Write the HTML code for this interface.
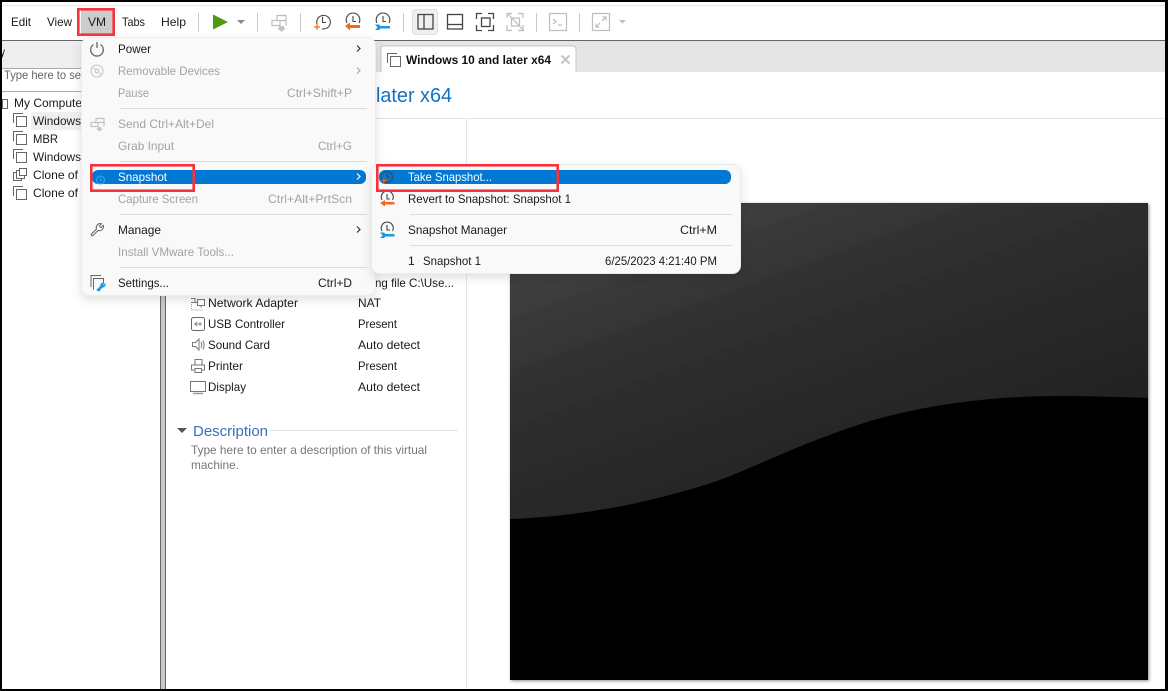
<!DOCTYPE html>
<html><head><meta charset="utf-8"><title>VMware Workstation</title>
<style>
html,body{margin:0;padding:0;background:#fff;width:1168px;height:691px;overflow:hidden}
svg{display:block}
text{font-family:"Liberation Sans",sans-serif;font-size:12px;fill:#1a1a1a}
.d{fill:#a3a3a3}
.w{fill:#fff}
.g{fill:#777}
.ic{fill:none;stroke:#666;stroke-width:1}
.dis{fill:none;stroke:#bdbdbd;stroke-width:1.2}
.sep{stroke:#c9c9c9;stroke-width:1}
</style></head><body>
<svg width="1168" height="691" viewBox="0 0 1168 691" xmlns="http://www.w3.org/2000/svg">
<defs>
<filter id="sh" x="-10%" y="-10%" width="120%" height="125%"><feDropShadow dx="0" dy="4" stdDeviation="5" flood-color="#000" flood-opacity=".12"/></filter>
<filter id="sh2" x="-3%" y="-3%" width="106%" height="106%"><feDropShadow dx="1" dy="1" stdDeviation="1.500" flood-color="#000" flood-opacity=".45"/></filter>
<linearGradient id="bg" gradientUnits="userSpaceOnUse" x1="700" y1="190" x2="820" y2="520">
<stop offset="0" stop-color="#3f3f3f"/><stop offset=".16" stop-color="#3c3c3c"/><stop offset=".16" stop-color="#393939"/><stop offset=".3" stop-color="#353535"/><stop offset=".3" stop-color="#323232"/><stop offset=".45" stop-color="#2f2f2f"/><stop offset=".45" stop-color="#2d2d2d"/><stop offset=".62" stop-color="#2a2a2a"/><stop offset=".62" stop-color="#292929"/><stop offset=".8" stop-color="#262626"/><stop offset="1" stop-color="#212121"/>
</linearGradient>
<g id="vm"><path d="M.5 10V.5H10" class="ic"/><rect x="3.500" y="3.500" width="10" height="10" class="ic"/></g>
<g id="vm2"><rect x=".5" y="4.500" width="8" height="8" class="ic"/><rect x="3.500" y="2.500" width="8" height="8" fill="#fff" stroke="#666"/><rect x="6.500" y=".5" width="7" height="7" fill="#fff" stroke="#666"/></g>
</defs>

<rect width="1168" height="691" fill="#fff"/>

<!-- toolbar -->
<rect x="0" y="5" width="1168" height="1" fill="#e5e5e5"/>
<rect x="81" y="10" width="32" height="25" fill="#ccc"/>
<text x="11" y="26" textLength="20" lengthAdjust="spacingAndGlyphs">Edit</text>
<text x="47" y="26" textLength="25" lengthAdjust="spacingAndGlyphs">View</text>
<text x="88" y="26" textLength="18" lengthAdjust="spacingAndGlyphs">VM</text>
<text x="122" y="26" textLength="23" lengthAdjust="spacingAndGlyphs">Tabs</text>
<text x="161" y="26" textLength="25" lengthAdjust="spacingAndGlyphs">Help</text>
<g class="sep"><path d="M198.500 13v19M257.500 13v19M300.500 13v19M403.500 13v19M536.500 13v19M579.500 13v19"/></g>
<path d="M213 14.500L228 22 213 29.500z" fill="#4f9a10"/>
<path d="M237 20h8l-4 4z" fill="#8a8a8a"/>
<g class="dis"><path d="M277 15.500h9v5h-9zM272 20.500h8v5h-8zM280 20.500h6v5"/></g><path d="M279 26h5v2h2l-4.500 4-4.500-4h2z" fill="#c4c4c4"/>
<g fill="none" stroke="#444" stroke-width="1.100"><path d="M317 24A6.800 6.800 0 1 1 322 28.800"/><path d="M322.500 17v5.500h3.500"/></g>
<path d="M317 24v6M314 27h6" stroke="#f26a21" stroke-width="1.200" fill="none"/>
<g fill="none" stroke="#444" stroke-width="1.100"><path d="M347 23A6.800 6.800 0 1 1 359 23"/><path d="M353 16v5.500h3"/></g>
<path d="M345 26l5-3.500v2.500h10v3h-10v2.500z" fill="#f26a21"/>
<g fill="none" stroke="#444" stroke-width="1.100"><path d="M377 23A6.800 6.800 0 1 1 389 23"/><path d="M383 16v5.500h3"/></g>
<path d="M375 24.500h4l1.500 1.500h9.500v2.500h-9.500l-1.500 1.500h-4l2.500-2.500z" fill="#1c9ae0"/>
<rect x="412.500" y="9.500" width="25" height="25" rx="3" fill="#efefef" stroke="#e0e0e0"/>
<g fill="none" stroke="#444" stroke-width="1.300"><rect x="418" y="14.500" width="15" height="14.500"/><path d="M424 14.500V29"/>
<rect x="447.500" y="14.500" width="15" height="14.500"/><path d="M447.500 24.500h15"/>
<path d="M476.500 19v-5.500H482M488 13.500h5.500V19M493.500 25v5.500H488M482 30.500h-5.500V25"/><rect x="481.500" y="18" width="8.500" height="8.500"/></g>
<g class="dis"><path d="M507 18v-4.500h5M518 13.500h5V18M523 25v5.500h-5M512 30.500h-5V25"/><rect x="511.500" y="18" width="8" height="8"/><path d="M507 13l17 18"/>
<rect x="549.500" y="13.500" width="17" height="17"/><path d="M553 19l3 2.500-3 2.500M558 25h4"/>
<rect x="592.500" y="13.500" width="17" height="17"/><path d="M596 27l4-4M596 23.500V27h3.500M606 17l-4 4M606 20.500V17h-3.500"/></g>
<path d="M619 20h7l-3.500 3.500z" fill="#c0c0c0"/>
<rect x="0" y="40" width="1168" height="1" fill="#666"/>

<!-- tabs band -->
<rect x="165" y="41" width="1003" height="31" fill="#e5e5e5"/>
<path d="M381 72V48q0-2 2-2h190q3 0 3 3v23" fill="#fff" stroke="#c4c4c4" stroke-width="1"/>
<g transform="translate(387 53)"><use href="#vm"/></g>
<text x="406" y="64" textLength="145" lengthAdjust="spacingAndGlyphs" style="font-weight:700;fill:#111">Windows 10 and later x64</text>
<path d="M561.500 55.500l8 8M569.500 55.500l-8 8" stroke="#c6c6c6" stroke-width="2"/>

<!-- header -->
<text x="376" y="102" textLength="76" lengthAdjust="spacingAndGlyphs" style="font-size:20px;fill:#1272c4">later x64</text>
<rect x="165" y="118" width="1003" height="1" fill="#e5e5e5"/>
<rect x="466" y="118" width="1" height="571" fill="#e5e5e5"/>

<!-- left panel -->
<rect x="0" y="41" width="160" height="27" fill="#eeeeee"/>
<text x="0" y="56" textLength="5" lengthAdjust="spacingAndGlyphs">y</text>
<rect x="0" y="68" width="160" height="1" fill="#aaa"/>
<rect x="0" y="91" width="160" height="1" fill="#aaa"/>
<text x="4" y="79" textLength="77" lengthAdjust="spacingAndGlyphs" style="fill:#666">Type here to se</text>
<rect x="2.500" y="99.500" width="5" height="9" fill="none" stroke="#666"/>
<text x="14" y="107" textLength="68" lengthAdjust="spacingAndGlyphs">My Compute</text>
<rect x="31" y="112" width="50" height="18" fill="#efefef"/>
<use href="#vm" x="13" y="113"/><text x="33" y="125" textLength="48" lengthAdjust="spacingAndGlyphs">Windows</text>
<use href="#vm" x="13" y="131"/><text x="33" y="143" textLength="25" lengthAdjust="spacingAndGlyphs">MBR</text>
<use href="#vm" x="13" y="149"/><text x="33" y="161" textLength="48" lengthAdjust="spacingAndGlyphs">Windows</text>
<use href="#vm2" x="13" y="168"/><text x="33" y="179" textLength="45" lengthAdjust="spacingAndGlyphs">Clone of</text>
<use href="#vm" x="13" y="186"/><text x="33" y="197" textLength="45" lengthAdjust="spacingAndGlyphs">Clone of</text>
<rect x="160" y="41" width="6" height="648" fill="#c9c9c9"/>
<rect x="160" y="41" width="1" height="648" fill="#666"/>
<rect x="165" y="41" width="1" height="648" fill="#666"/>

<!-- details -->
<text x="375" y="287" textLength="79" lengthAdjust="spacingAndGlyphs">ng file C:\Use...</text>
<path d="M191 298.500h4v4h-4M197.500 299.500h7v6h-7zM191 302.500h6.500M201 305.500v2" fill="none" stroke="#777"/><path d="M191.500 304v6h12" fill="none" stroke="#999" stroke-dasharray="1 1"/>
<text x="208" y="307" textLength="90" lengthAdjust="spacingAndGlyphs">Network Adapter</text><text x="358" y="307" textLength="23" lengthAdjust="spacingAndGlyphs">NAT</text>
<rect x="191.500" y="317.500" width="13" height="13" rx="2" class="ic"/><path d="M194 324h8M197 322l-2 2 2 2M200 322v4" stroke="#888" fill="none"/>
<text x="208" y="328" textLength="77" lengthAdjust="spacingAndGlyphs">USB Controller</text><text x="358" y="328" textLength="39" lengthAdjust="spacingAndGlyphs">Present</text>
<path d="M192.500 342.500h3l3.500-3.500v11l-3.500-3.500h-3zM201 342c1 2 1 4 0 6M203 340.500c1.500 3 1.500 6 0 9" fill="none" stroke="#777"/>
<text x="208" y="349" textLength="62" lengthAdjust="spacingAndGlyphs">Sound Card</text><text x="358" y="349" textLength="62" lengthAdjust="spacingAndGlyphs">Auto detect</text>
<path d="M195 365v-5.500h7v5.500M194.500 370h-3v-5h13v5h-3M195 368.500h6.500v4H195z" fill="none" stroke="#777"/>
<text x="208" y="370" textLength="35" lengthAdjust="spacingAndGlyphs">Printer</text><text x="358" y="370" textLength="39" lengthAdjust="spacingAndGlyphs">Present</text>
<rect x="190.500" y="381.500" width="15" height="10" fill="none" stroke="#777"/><path d="M193 393.500h10" stroke="#999" stroke-width="1.500"/>
<text x="208" y="391" textLength="38" lengthAdjust="spacingAndGlyphs">Display</text><text x="358" y="391" textLength="62" lengthAdjust="spacingAndGlyphs">Auto detect</text>
<path d="M177 428h10l-5 5z" fill="#4a5560"/>
<text x="193" y="436" textLength="75" lengthAdjust="spacingAndGlyphs" style="font-size:15px;fill:#3b6fc0">Description</text>
<rect x="270" y="430" width="188" height="1" fill="#e5e5e5"/>
<text x="191" y="454" textLength="236" lengthAdjust="spacingAndGlyphs" class="g">Type here to enter a description of this virtual</text>
<text x="191" y="469" textLength="48" lengthAdjust="spacingAndGlyphs" class="g">machine.</text>

<!-- VM preview -->
<rect x="510" y="203" width="638" height="477" fill="#000" filter="url(#sh2)"/>
<path d="M510 203H1148V398C1120 397 1090 396 1060 396C1000 396 930 403 867 422C810 440 770 460 720 480C660 500 590 516 510 519Z" fill="url(#bg)"/>

<!-- main menu -->
<rect x="81.500" y="37.500" width="294" height="258" rx="8" fill="#f9f9f9" stroke="#ececec" filter="url(#sh)"/>
<g fill="none" stroke="#666" stroke-width="1.300"><path d="M93.500 44.500a6.300 6.300 0 1 0 7 0M97 42v6"/></g>
<g fill="none" stroke="#c4c4c4" stroke-width="1.100"><circle cx="97" cy="71" r="6"/><circle cx="97" cy="71" r="1.800"/><path d="M93.500 69l1.500-1M100.500 73l-1.500 1"/></g>
<text x="118" y="53" textLength="33" lengthAdjust="spacingAndGlyphs">Power</text>
<text x="118" y="75" textLength="102" lengthAdjust="spacingAndGlyphs" class="d">Removable Devices</text>
<text x="118" y="97" textLength="31" lengthAdjust="spacingAndGlyphs" class="d">Pause</text>
<text x="287" y="97" textLength="65" lengthAdjust="spacingAndGlyphs" class="d">Ctrl+Shift+P</text>
<rect x="120" y="108" width="247" height="1" fill="#dcdcdc"/>
<g class="dis" style="stroke:#c2c2c2"><path d="M96 118.500h8v4h-8zM91 122.500h7v4h-7zM98 122.500h6v4"/></g><path d="M98 127h3v1.500h2l-3.500 3-3.500-3h2z" fill="#c4c4c4"/>
<text x="118" y="128" textLength="96" lengthAdjust="spacingAndGlyphs" class="d">Send Ctrl+Alt+Del</text>
<text x="118" y="150" textLength="56" lengthAdjust="spacingAndGlyphs" class="d">Grab Input</text>
<text x="318" y="150" textLength="34" lengthAdjust="spacingAndGlyphs" class="d">Ctrl+G</text>
<rect x="120" y="161" width="247" height="1" fill="#dcdcdc"/>
<rect x="92" y="170" width="274" height="14" rx="6" fill="#0078d4"/>
<circle cx="100.500" cy="180" r="4" fill="none" stroke="#35a8f0" stroke-width="1.100"/><path d="M100.500 177.500v3h2" stroke="#35a8f0" fill="none"/>
<text x="118" y="181" textLength="49" lengthAdjust="spacingAndGlyphs" class="w">Snapshot</text>
<text x="118" y="203" textLength="80" lengthAdjust="spacingAndGlyphs" class="d">Capture Screen</text>
<text x="268" y="203" textLength="84" lengthAdjust="spacingAndGlyphs" class="d">Ctrl+Alt+PrtScn</text>
<rect x="120" y="214" width="247" height="1" fill="#dcdcdc"/>
<path d="M91.500 234l5-5c-1-2.500 1-5.500 4-5.500l1 .3-2.200 2.200 1.700 1.700 2.200-2.200.3 1c0 3-3 5-5.500 4l-5 5c-1 1-2.500-.5-1.500-1.500z" fill="none" stroke="#666" stroke-width="1"/>
<text x="118" y="234" textLength="43" lengthAdjust="spacingAndGlyphs">Manage</text>
<text x="118" y="256" textLength="116" lengthAdjust="spacingAndGlyphs" class="d">Install VMware Tools...</text>
<rect x="120" y="267" width="247" height="1" fill="#dcdcdc"/>
<path d="M91 287v-11.500h10" class="ic"/><path d="M93.500 289.500v-11h10v5" class="ic"/><path d="M97 290l4-4c-.5-1.500.5-3 2.500-3l-1 1.500 1.500 1 1-1.500c.3 2-1.500 3.500-3 3l-3 4z" fill="#1c9ae0" stroke="#1c9ae0"/>
<text x="118" y="287" textLength="51" lengthAdjust="spacingAndGlyphs">Settings...</text>
<text x="318" y="287" textLength="34" lengthAdjust="spacingAndGlyphs">Ctrl+D</text>
<g fill="none" stroke-width="1.200"><path d="M357 45.500l3 3-3 3M357 226.500l3 3-3 3" stroke="#333"/><path d="M357 67.500l3 3-3 3" stroke="#aaa"/><path d="M357 173.500l3 3-3 3" stroke="#fff"/></g>

<!-- submenu -->
<rect x="371.500" y="164.500" width="369" height="109" rx="8" fill="#f9f9f9" stroke="#ececec" filter="url(#sh)"/>
<rect x="379" y="170" width="352" height="14" rx="6" fill="#0078d4"/>
<g fill="none" stroke="#444" stroke-width="1"><circle cx="387" cy="177" r="5.500"/><path d="M387 173.500v3.500h3"/></g>
<path d="M384 178v5M381.500 180.500h5" stroke="#f26a21" fill="none"/>
<text x="408" y="181" textLength="84" lengthAdjust="spacingAndGlyphs" class="w">Take Snapshot...</text>
<g fill="none" stroke="#444" stroke-width="1.100"><path d="M382 200A6 6 0 1 1 392.500 200"/><path d="M387 194v5h3"/></g>
<path d="M380 203l5-3v2h9.500v2.500H385v2z" fill="#f26a21"/>
<text x="408" y="203" textLength="163" lengthAdjust="spacingAndGlyphs">Revert to Snapshot: Snapshot 1</text>
<rect x="410" y="214" width="322" height="1" fill="#dcdcdc"/>
<g fill="none" stroke="#444" stroke-width="1.100"><path d="M382 231A6 6 0 1 1 392.500 231"/><path d="M387 225v5h3"/></g>
<path d="M380 232.500h4l1.500 1.500h9v2.500h-9L384 238h-4l2.500-2.500z" fill="#1c9ae0"/>
<text x="408" y="234" textLength="99" lengthAdjust="spacingAndGlyphs">Snapshot Manager</text>
<text x="680" y="234" textLength="37" lengthAdjust="spacingAndGlyphs">Ctrl+M</text>
<rect x="410" y="245" width="322" height="1" fill="#dcdcdc"/>
<text x="408" y="265">1</text>
<text x="423" y="265" textLength="58" lengthAdjust="spacingAndGlyphs">Snapshot 1</text>
<text x="605" y="265" textLength="112" lengthAdjust="spacingAndGlyphs">6/25/2023 4:21:40 PM</text>

<!-- red annotation boxes -->
<g fill="none" stroke="#f5333f" stroke-width="2.600">
<rect x="78.300" y="9.300" width="35.400" height="25.400"/>
<rect x="91.300" y="165.300" width="102.400" height="25.400"/>
<rect x="377.300" y="165.300" width="180.400" height="25.400"/>
</g>

<!-- screenshot black border -->
<g fill="#000"><rect width="1168" height="2"/><rect y="689" width="1168" height="2"/><rect width="2" height="691"/><rect x="1165" width="3" height="691"/></g>
</svg>
</body></html>
